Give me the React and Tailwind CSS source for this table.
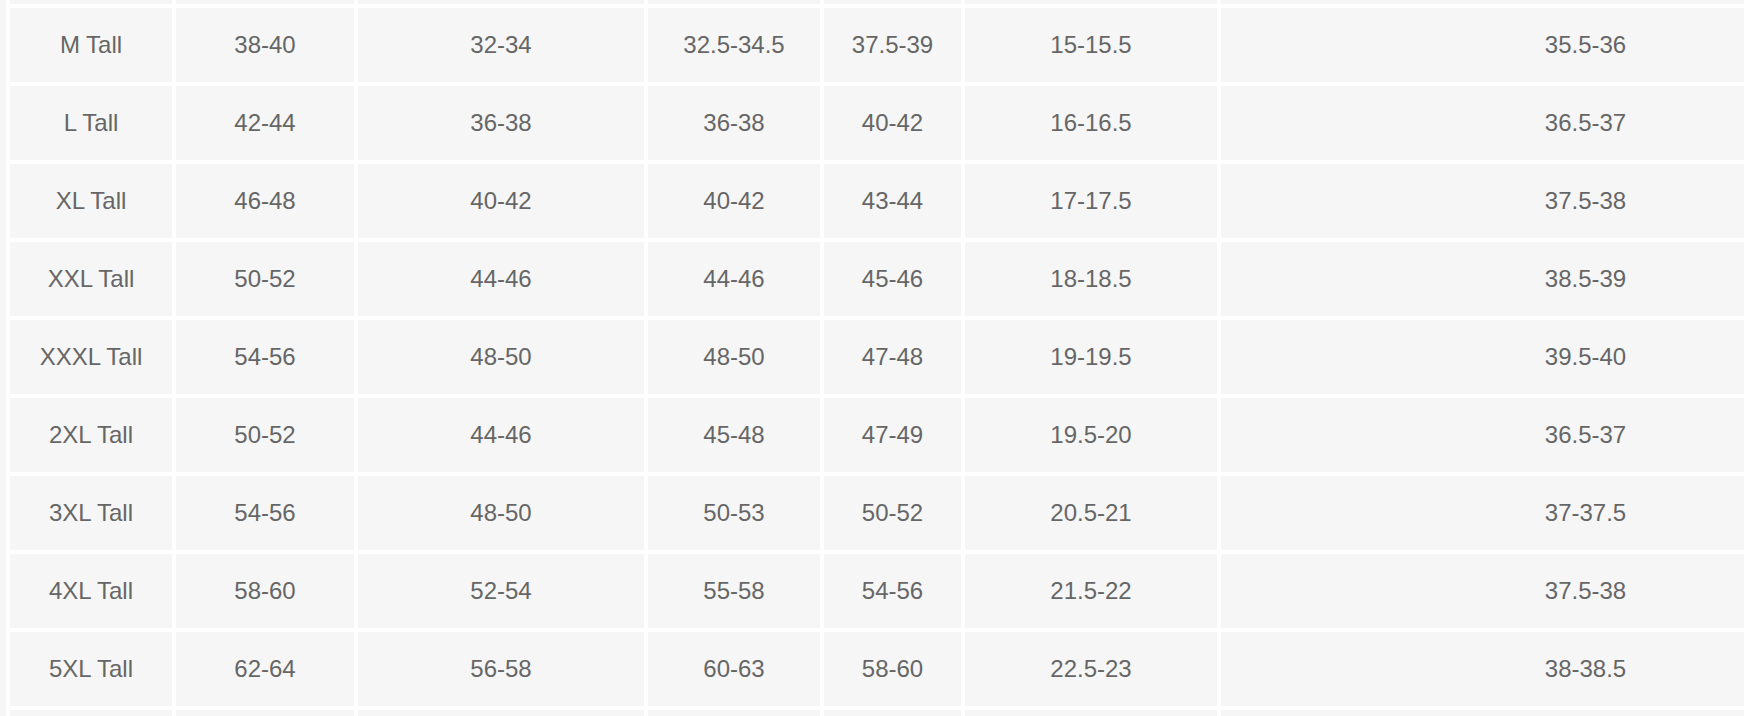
import React from 'react';

const ROWS = [
  ['M Tall', '38-40', '32-34', '32.5-34.5', '37.5-39', '15-15.5', '35.5-36'],
  ['L Tall', '42-44', '36-38', '36-38', '40-42', '16-16.5', '36.5-37'],
  ['XL Tall', '46-48', '40-42', '40-42', '43-44', '17-17.5', '37.5-38'],
  ['XXL Tall', '50-52', '44-46', '44-46', '45-46', '18-18.5', '38.5-39'],
  ['XXXL Tall', '54-56', '48-50', '48-50', '47-48', '19-19.5', '39.5-40'],
  ['2XL Tall', '50-52', '44-46', '45-48', '47-49', '19.5-20', '36.5-37'],
  ['3XL Tall', '54-56', '48-50', '50-53', '50-52', '20.5-21', '37-37.5'],
  ['4XL Tall', '58-60', '52-54', '55-58', '54-56', '21.5-22', '37.5-38'],
  ['5XL Tall', '62-64', '56-58', '60-63', '58-60', '22.5-23', '38-38.5'],
];

const EMPTY = ['', '', '', '', '', '', ''];

const App = () => (
  <div className="flex h-[716px] w-[1744px] overflow-hidden bg-white font-['Liberation_Sans',Arial,sans-serif] text-[24px] text-[#666666]">
    {/* edge of the outer table */}
    <div className="w-[6px] shrink-0 bg-[#f6f6f6]" />
    <div className="grid shrink-0 grid-cols-[162px_178px_286px_172px_137px_252px_729px] content-start gap-1 px-1">
      {/* tail of the row above, scrolled out of view */}
      {EMPTY.map((_, i) => (
        <div key={`top-${i}`} className="h-1 bg-[#f6f6f6]" />
      ))}
      {ROWS.map((row) =>
        row.map((cell, i) => (
          <div
            key={`${row[0]}-${i}`}
            className="flex h-[74px] items-center justify-center bg-[#f6f6f6] leading-none"
          >
            {cell}
          </div>
        ))
      )}
      {EMPTY.map((_, i) => (
        <div key={`bottom-${i}`} className="h-[74px] bg-[#f6f6f6]" />
      ))}
    </div>
  </div>
);

export default App;
